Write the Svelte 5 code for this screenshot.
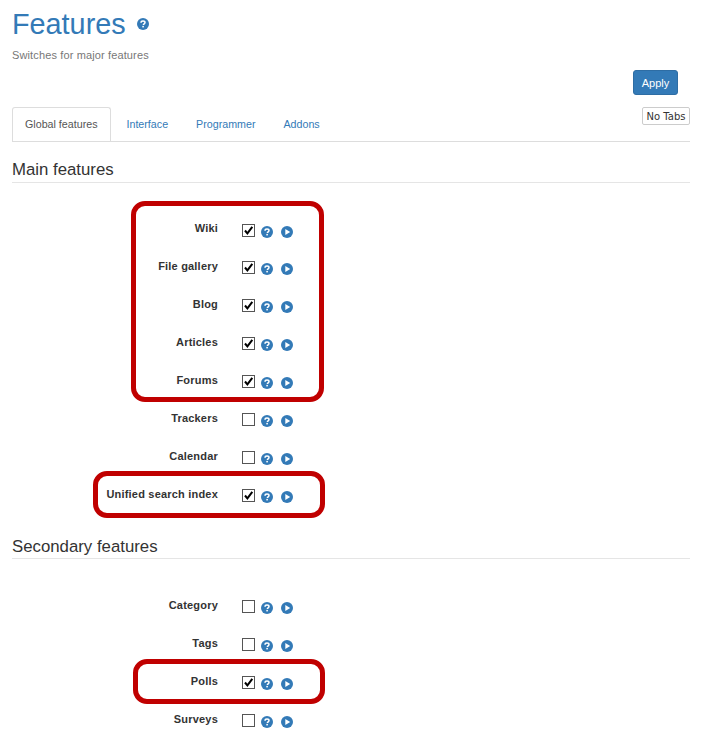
<script>
  const mainFeatures = [
    { label: 'Wiki', on: true },
    { label: 'File gallery', on: true },
    { label: 'Blog', on: true },
    { label: 'Articles', on: true },
    { label: 'Forums', on: true },
    { label: 'Trackers', on: false },
    { label: 'Calendar', on: false },
    { label: 'Unified search index', on: true }
  ];

  const secondaryFeatures = [
    { label: 'Category', on: false },
    { label: 'Tags', on: false },
    { label: 'Polls', on: true },
    { label: 'Surveys', on: false }
  ];

  const tabs = ['Global features', 'Interface', 'Programmer', 'Addons'];
</script>

{#snippet help(cls)}
  <svg class={cls} viewBox="0 0 12 12" aria-hidden="true">
    <circle cx="6" cy="6" r="6" fill="#337ab7" />
    <path d="M4 4.7C4 3.6 4.9 3 6 3s2 .6 2 1.6c0 1.3-1.6 1.3-1.6 2.4" fill="none" stroke="#fff" stroke-width="1.5" />
    <rect x="5.3" y="7.9" width="1.6" height="1.5" fill="#fff" />
  </svg>
{/snippet}

{#snippet rows(items)}
  {#each items as item}
    <div class="row">
      <div class="label">{item.label}</div>
      <span class="check">
        {#if item.on}
          <svg viewBox="0 0 13 13" aria-hidden="true">
            <path d="M3 6.5L5.4 9.4L10.3 2.8" fill="none" stroke="#000" stroke-width="2" />
          </svg>
        {/if}
      </span>
      {@render help('icon')}
      <svg class="icon play" viewBox="0 0 12 12" aria-hidden="true">
        <circle cx="6" cy="6" r="6" fill="#337ab7" />
        <path d="M4.3 2.9L9.2 6L4.3 9.1Z" fill="#fff" />
      </svg>
    </div>
  {/each}
{/snippet}

<div class="page">
  <header class="head">
    <h1>Features</h1>
    {@render help('title-help')}
  </header>
  <p class="sub">Switches for major features</p>

  <div class="actions">
    <button class="apply">Apply</button>
  </div>

  <div class="tabbar">
    <nav class="tabs">
      {#each tabs as tab, i}
        <span class="tab" class:active={i === 0}>{tab}</span>
      {/each}
    </nav>
    <button class="notabs">No Tabs</button>
  </div>

  <h2 class="main-title">Main features</h2>
  <section class="group main-group">
    {@render rows(mainFeatures)}
  </section>

  <h2 class="second-title">Secondary features</h2>
  <section class="group second-group">
    {@render rows(secondaryFeatures)}
  </section>

  <div class="mark mark-a"></div>
  <div class="mark mark-b"></div>
  <div class="mark mark-c"></div>
</div>

<style>
  :global(body) {
    margin: 0;
    background: #fff;
  }

  .page {
    position: relative;
    height: 752px;
    overflow: hidden;
    padding: 0 21px 0 12px;
    font-family: "Liberation Sans", Arial, sans-serif;
    color: #333;
  }

  .head {
    display: flex;
    align-items: center;
    height: 48px;
  }

  h1 {
    margin: 0;
    font-size: 28.8px;
    font-weight: 400;
    line-height: 48px;
    color: #337ab7;
  }

  .title-help {
    width: 12px;
    height: 12px;
    margin: 0 0 0 11px;
  }

  .sub {
    margin: 0;
    font-size: 11px;
    line-height: 14px;
    letter-spacing: 0.13px;
    color: #777;
  }

  .actions {
    display: flex;
    justify-content: flex-end;
    margin-top: 8px;
    padding-right: 12px;
  }

  .apply {
    width: 45px;
    height: 25px;
    padding: 0;
    border: 1px solid #2e6da4;
    border-radius: 3px;
    background: #337ab7;
    color: #fff;
    font: 11px "Liberation Sans", Arial, sans-serif;
  }

  .tabbar {
    display: flex;
    justify-content: space-between;
    align-items: flex-start;
    height: 55px;
    margin-top: -8px;
    box-sizing: border-box;
    border-bottom: 1px solid #ddd;
  }

  .tabs {
    display: flex;
    margin-top: 20px;
  }

  .tab {
    height: 34px;
    box-sizing: border-box;
    padding: 9px 13px 0;
    border: 1px solid transparent;
    border-bottom: 0;
    font-size: 10.7px;
    line-height: 14px;
    color: #337ab7;
  }

  .active {
    padding: 9px 13px 0 12px;
    border-color: #ddd;
    border-radius: 3px 3px 0 0;
    background: #fff;
    color: #555;
    margin-right: 1px;
  }

  .notabs {
    width: 48px;
    height: 18px;
    margin-top: 20px;
    padding: 0;
    border: 1px solid #ccc;
    border-radius: 2px;
    background: #fff;
    color: #333;
    font: 10px "DejaVu Sans", sans-serif;
    white-space: nowrap;
  }

  h2 {
    margin: 0;
    font-size: 16.8px;
    font-weight: 400;
    line-height: 20px;
    color: #333;
    border-bottom: 1px solid #e5e5e5;
  }

  .main-title {
    margin-top: 18px;
    padding-bottom: 2px;
  }

  .second-title {
    margin-top: 12px;
    padding-bottom: 1px;
  }

  .main-group {
    margin-top: 38px;
  }

  .second-group {
    margin-top: 39px;
  }

  .row {
    display: flex;
    align-items: flex-start;
    height: 38px;
  }

  .label {
    width: 206px;
    font-size: 11px;
    font-weight: 700;
    line-height: 14px;
    letter-spacing: 0.2px;
    text-align: right;
    color: #333;
    white-space: nowrap;
  }

  .check {
    width: 13px;
    height: 13px;
    margin: 2px 0 0 24px;
    box-sizing: border-box;
    border: 1px solid #555;
    background: #fff;
    flex: none;
    display: block;
  }

  .check svg {
    display: block;
    width: 13px;
    height: 13px;
    margin: -1px;
  }

  .icon {
    width: 12px;
    height: 12px;
    margin: 4px 0 0 6px;
    flex: none;
  }

  .play {
    margin-left: 8px;
  }

  /* first row of the list sits a pixel lower in the original */
  .main-group .row:first-child .check {
    margin-top: 3px;
  }

  .main-group .row:first-child .icon {
    margin-top: 5px;
  }

  .mark {
    position: absolute;
    box-sizing: border-box;
    border: 5px solid #c00000;
    border-radius: 14px;
  }

  .mark-a {
    left: 131px;
    top: 201px;
    width: 193px;
    height: 201px;
  }

  .mark-b {
    left: 93px;
    top: 471px;
    width: 232px;
    height: 47px;
  }

  .mark-c {
    left: 133px;
    top: 659px;
    width: 192px;
    height: 45px;
  }
</style>
